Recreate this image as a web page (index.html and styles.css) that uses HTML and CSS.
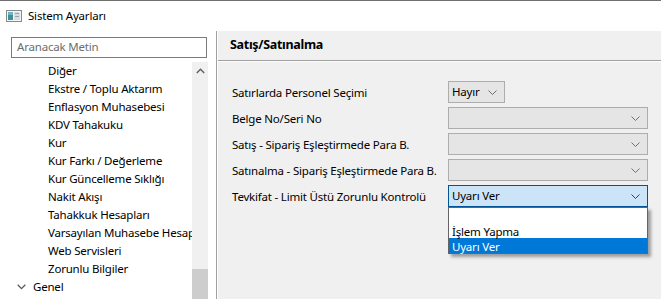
FILE: index.html
```html
<!DOCTYPE html>
<html lang="tr">
<head>
<meta charset="utf-8">
<title>Sistem Ayarları</title>
<link rel="stylesheet" href="styles.css">
</head>
<body>
<div class="window">
  <div class="titlebar">
    <svg class="app-icon" width="16" height="12" viewBox="0 0 16 12">
      <rect x="0.5" y="0.5" width="15" height="11" fill="#f4f4f4" stroke="#8a8a8a"/>
      <rect x="2" y="2" width="5" height="8" fill="#3f8f9a"/>
      <rect x="2" y="2" width="5" height="3" fill="#6fb3c7"/>
      <rect x="8" y="2" width="6" height="8" fill="#d8dde0"/>
      <rect x="9" y="3" width="4" height="1" fill="#9aa4aa"/>
      <rect x="9" y="6" width="4" height="1" fill="#9aa4aa"/>
    </svg>
    <span class="title">Sistem Ayarları</span>
  </div>
  <div class="main">
    <div class="left">
      <div class="search">Aranacak Metin</div>
      <div class="tree-wrap">
        <ul class="tree">
          <li class="leaf">Diğer</li>
          <li class="leaf">Ekstre / Toplu Aktarım</li>
          <li class="leaf">Enflasyon Muhasebesi</li>
          <li class="leaf">KDV Tahakuku</li>
          <li class="leaf">Kur</li>
          <li class="leaf">Kur Farkı / Değerleme</li>
          <li class="leaf">Kur Güncelleme Sıklığı</li>
          <li class="leaf">Nakit Akışı</li>
          <li class="leaf">Tahakkuk Hesapları</li>
          <li class="leaf">Varsayılan Muhasebe Hesapları</li>
          <li class="leaf">Web Servisleri</li>
          <li class="leaf">Zorunlu Bilgiler</li>
          <li class="node">
            <svg class="expander" width="9" height="6" viewBox="0 0 9 6"><path d="M0.7 0.8 L4.5 4.6 L8.3 0.8" fill="none" stroke="#5a5a5a" stroke-width="1.3"/></svg>
            <span>Genel</span>
          </li>
        </ul>
        <div class="vscroll">
          <div class="vscroll-up">
            <svg width="9" height="6" viewBox="0 0 9 6"><path d="M0.8 5 L4.5 1.3 L8.2 5" fill="none" stroke="#606060" stroke-width="1.4"/></svg>
          </div>
          <div class="vscroll-track"></div>
          <div class="vscroll-thumb"></div>
        </div>
        <div class="left-gap"></div>
      </div>
    </div>
    <div class="splitter"></div>
    <div class="right">
      <div class="section-header">Satış/Satınalma</div>
      <div class="form">
        <div class="row">
          <label class="lbl">Satırlarda Personel Seçimi</label>
          <div class="combo combo-small">
            <span class="val">Hayır</span>
            <svg class="chev" width="9" height="5" viewBox="0 0 9 5"><path d="M0.5 0.5 L4.5 4.5 L8.5 0.5" fill="none" stroke="#707070" stroke-width="1"/></svg>
          </div>
        </div>
        <div class="row">
          <label class="lbl">Belge No/Seri No</label>
          <div class="combo">
            <span class="val"></span>
            <svg class="chev" width="9" height="5" viewBox="0 0 9 5"><path d="M0.5 0.5 L4.5 4.5 L8.5 0.5" fill="none" stroke="#707070" stroke-width="1"/></svg>
          </div>
        </div>
        <div class="row">
          <label class="lbl">Satış - Sipariş Eşleştirmede Para B.</label>
          <div class="combo">
            <span class="val"></span>
            <svg class="chev" width="9" height="5" viewBox="0 0 9 5"><path d="M0.5 0.5 L4.5 4.5 L8.5 0.5" fill="none" stroke="#707070" stroke-width="1"/></svg>
          </div>
        </div>
        <div class="row">
          <label class="lbl">Satınalma - Sipariş Eşleştirmede Para B.</label>
          <div class="combo">
            <span class="val"></span>
            <svg class="chev" width="9" height="5" viewBox="0 0 9 5"><path d="M0.5 0.5 L4.5 4.5 L8.5 0.5" fill="none" stroke="#707070" stroke-width="1"/></svg>
          </div>
        </div>
        <div class="row">
          <label class="lbl">Tevkifat - Limit Üstü Zorunlu Kontrolü</label>
          <div class="combo-holder">
            <div class="combo combo-focus">
              <span class="val">Uyarı Ver</span>
              <svg class="chev" width="9" height="5" viewBox="0 0 9 5"><path d="M0.5 0.5 L4.5 4.5 L8.5 0.5" fill="none" stroke="#404040" stroke-width="1"/></svg>
            </div>
            <ul class="dropdown">
              <li class="opt"></li>
              <li class="opt">İşlem Yapma</li>
              <li class="opt opt-selected">Uyarı Ver</li>
            </ul>
          </div>
        </div>
      </div>
    </div>
  </div>
</div>
</body>
</html>
```

FILE: styles.css
```css
* { box-sizing: border-box; }
html, body {
  margin: 0;
  padding: 0;
  width: 661px;
  height: 299px;
  overflow: hidden;
  background: #fff;
  font-family: "Noto Sans", "Open Sans", sans-serif;
  font-size: 11.5px;
  letter-spacing: -0.2px;
  color: #000;
}
ul { list-style: none; margin: 0; padding: 0; }

.window {
  width: 661px;
  height: 299px;
  display: flex;
  flex-direction: column;
}

.titlebar {
  height: 31px;
  flex: none;
  border-top: 1px solid #707070;
  background: #fff;
  display: flex;
  align-items: center;
  padding-left: 6px;
  padding-bottom: 1px;
}
.app-icon { margin-right: 6px; }
.title { line-height: 16px; }

.main {
  flex: 1;
  display: flex;
  min-height: 0;
}

.left {
  width: 216px;
  flex: none;
  background: #fff;
  display: flex;
  flex-direction: column;
}
.search {
  margin: 6px 9px 0 11px;
  height: 21px;
  border: 1px solid #7a7a7a;
  color: #6d6d6d;
  padding-left: 5px;
  line-height: 18px;
}
.tree-wrap {
  margin-top: 4px;
  flex: 1;
  display: flex;
  min-height: 0;
}
.tree {
  width: 192px;
  flex: none;
  overflow: hidden;
  white-space: nowrap;
}
.tree li {
  height: 18px;
  line-height: 18px;
}
.tree .leaf { padding-left: 48px; }
.tree .node {
  padding-left: 17px;
  display: flex;
  align-items: center;
}
.tree .node .expander { margin-right: 7px; }

.vscroll {
  width: 16px;
  flex: none;
  background: #f0f0f0;
  display: flex;
  flex-direction: column;
}
.vscroll-up {
  height: 17px;
  display: flex;
  align-items: center;
  justify-content: center;
}
.vscroll-track { flex: 1; }
.vscroll-thumb {
  height: 30px;
  background: #cdcdcd;
}
.left-gap { flex: 1; }

.splitter {
  width: 2px;
  flex: none;
  border-left: 1px solid #a0a0a0;
  background: #fff;
}

.right {
  flex: 1;
  background: #f0f0f0;
  display: flex;
  flex-direction: column;
  min-width: 0;
}
.section-header {
  height: 30px;
  flex: none;
  padding-left: 12px;
  font-weight: bold;
  font-size: 12.5px;
  letter-spacing: -0.3px;
  line-height: 28px;
  border-bottom: 1px solid #a0a0a0;
  box-shadow: 0 1px 0 #fcfcfc;
}
.form {
  padding: 20px 0 0 14px;
  display: flex;
  flex-direction: column;
  gap: 4px;
}
.row {
  display: flex;
  align-items: center;
  height: 22px;
}
.lbl {
  width: 216px;
  flex: none;
  white-space: nowrap;
}
.combo-holder { position: relative; }
.combo {
  width: 200px;
  height: 22px;
  border: 1px solid #adadad;
  background: #e5e5e5;
  display: flex;
  align-items: center;
  justify-content: space-between;
  padding: 0 7px 0 3px;
}
.combo-small { width: 57px; }
.combo-focus {
  background: #cce4f7;
  border-color: #005499;
}
.val { line-height: 18px; }
.chev { flex: none; }

.dropdown {
  position: absolute;
  left: 0;
  top: 22px;
  width: 200px;
  border: 1px solid #646464;
  background: #fff;
  box-shadow: 3px 3px 3px rgba(0, 0, 0, 0.35);
}
.opt {
  height: 15px;
  line-height: 15px;
  padding: 1px 0 0 3px;
}
.opt-selected {
  background: #0078d7;
  color: #fff;
}
```
